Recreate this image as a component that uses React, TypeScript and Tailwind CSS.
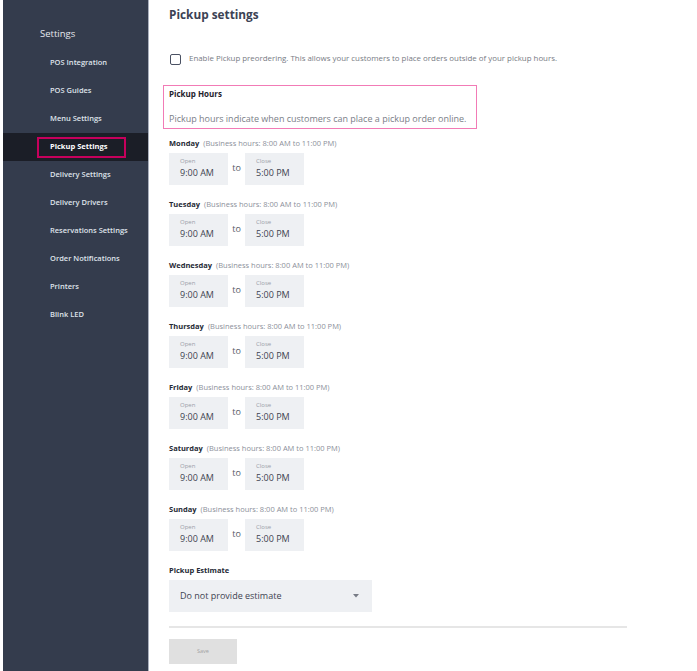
const NAV = [
  'POS Integration',
  'POS Guides',
  'Menu Settings',
  'Pickup Settings',
  'Delivery Settings',
  'Delivery Drivers',
  'Reservations Settings',
  'Order Notifications',
  'Printers',
  'Blink LED',
]

const DAYS = ['Monday', 'Tuesday', 'Wednesday', 'Thursday', 'Friday', 'Saturday', 'Sunday']

function TimeBox({ label, value }: { label: string; value: string }) {
  return (
    <div className="flex h-[32px] w-[59px] flex-col bg-[#eef0f3] pl-[11px] pt-[4px]">
      <span className="text-[6px] leading-[8px] text-[#9a9ea8]">{label}</span>
      <span className="mt-[2px] text-[9px] leading-[12px] text-[#3e4351]">{value}</span>
    </div>
  )
}

function DayRow({ day, first }: { day: string; first: boolean }) {
  return (
    <div className={first ? 'mt-[8px]' : 'mt-[13px]'}>
      <p className="text-[7.5px] leading-[12px]">
        <span className="font-bold text-[#252a35]">{day}</span>
        <span className="ml-[4px] text-[#8c909a]">(Business hours: 8:00 AM to 11:00 PM)</span>
      </p>
      <div className="mt-[4px] flex items-center">
        <TimeBox label="Open" value="9:00 AM" />
        <span className="w-[17px] pb-[2px] text-center text-[9px] text-[#555a66]">to</span>
        <TimeBox label="Close" value="5:00 PM" />
      </div>
    </div>
  )
}

export default function App() {
  return (
    <div
      className="flex h-[671px] w-[697px] overflow-hidden bg-white"
      style={{ fontFamily: '"Open Sans", "Noto Sans", sans-serif' }}
    >
      <aside className="ml-[3px] h-full w-[146px] shrink-0 border-r border-[#aab0bd] bg-[#343c4d]">
        <div className="flex h-[49px] items-center pl-[37px] pt-[20px] text-[9.5px] text-[#e4e7ee]">
          Settings
        </div>
        <nav className="flex flex-col">
          {NAV.map((item) => {
            const active = item === 'Pickup Settings'
            return (
              <div
                key={item}
                className={`flex h-[28px] items-center pl-[34px] ${active ? 'bg-[#1b1e27]' : ''}`}
              >
                {active ? (
                  <span className="flex h-[21px] w-[89px] items-center border-2 border-pink-700 px-[11px] text-[7.5px] font-bold text-white">
                    {item}
                  </span>
                ) : (
                  <span className="flex h-[21px] items-center px-[13px] text-[7.5px] font-semibold text-[#dfe3ea]">
                    {item}
                  </span>
                )}
              </div>
            )
          })}
        </nav>
      </aside>

      <main className="flex-1 pl-[20px]">
        <h1 className="flex h-[30px] items-center text-[11.8px] font-bold text-[#3b4254]">
          Pickup settings
        </h1>

        <label className="mt-[23px] flex h-[12px] items-center">
          <span className="ml-[1px] h-[11px] w-[11px] rounded-[2px] border-[1.5px] border-[#4a5163]" />
          <span className="ml-[8px] text-[7.9px] text-[#777b84]">
            Enable Pickup preordering. This allows your customers to place orders outside of your pickup hours.
          </span>
        </label>

        <div className="ml-[-6px] mt-[20px] h-[44px] w-[314px] border border-[#f27bb6] pl-[5px] pt-[1px]">
          <p className="text-[8px] font-bold leading-[14px] text-[#1f232c]">Pickup Hours</p>
          <p className="mt-[12px] text-[9px] leading-[12px] text-[#7a7e87]">
            Pickup hours indicate when customers can place a pickup order online.
          </p>
        </div>

        {DAYS.map((day, i) => (
          <DayRow key={day} day={day} first={i === 0} />
        ))}

        <p className="mt-[13px] text-[7.5px] font-bold leading-[12px] text-[#252a35]">Pickup Estimate</p>
        <div className="mt-[4px] flex h-[32px] w-[203px] items-center justify-between bg-[#eef0f3] pl-[11px] pr-[13px]">
          <span className="text-[9px] text-[#3e4351]">Do not provide estimate</span>
          <svg width="6" height="4" viewBox="0 0 6 4">
            <path d="M0 0 L6 0 L3 3.5 Z" fill="#777b85" />
          </svg>
        </div>

        <div className="mt-[14px] h-[2px] w-[458px] bg-[#e6e6e6]" />

        <button className="mt-[11px] flex h-[25px] w-[68px] items-center justify-center bg-[#e0e0e0] text-[5.5px] text-[#a2a2a2]">
          Save
        </button>
      </main>
    </div>
  )
}
